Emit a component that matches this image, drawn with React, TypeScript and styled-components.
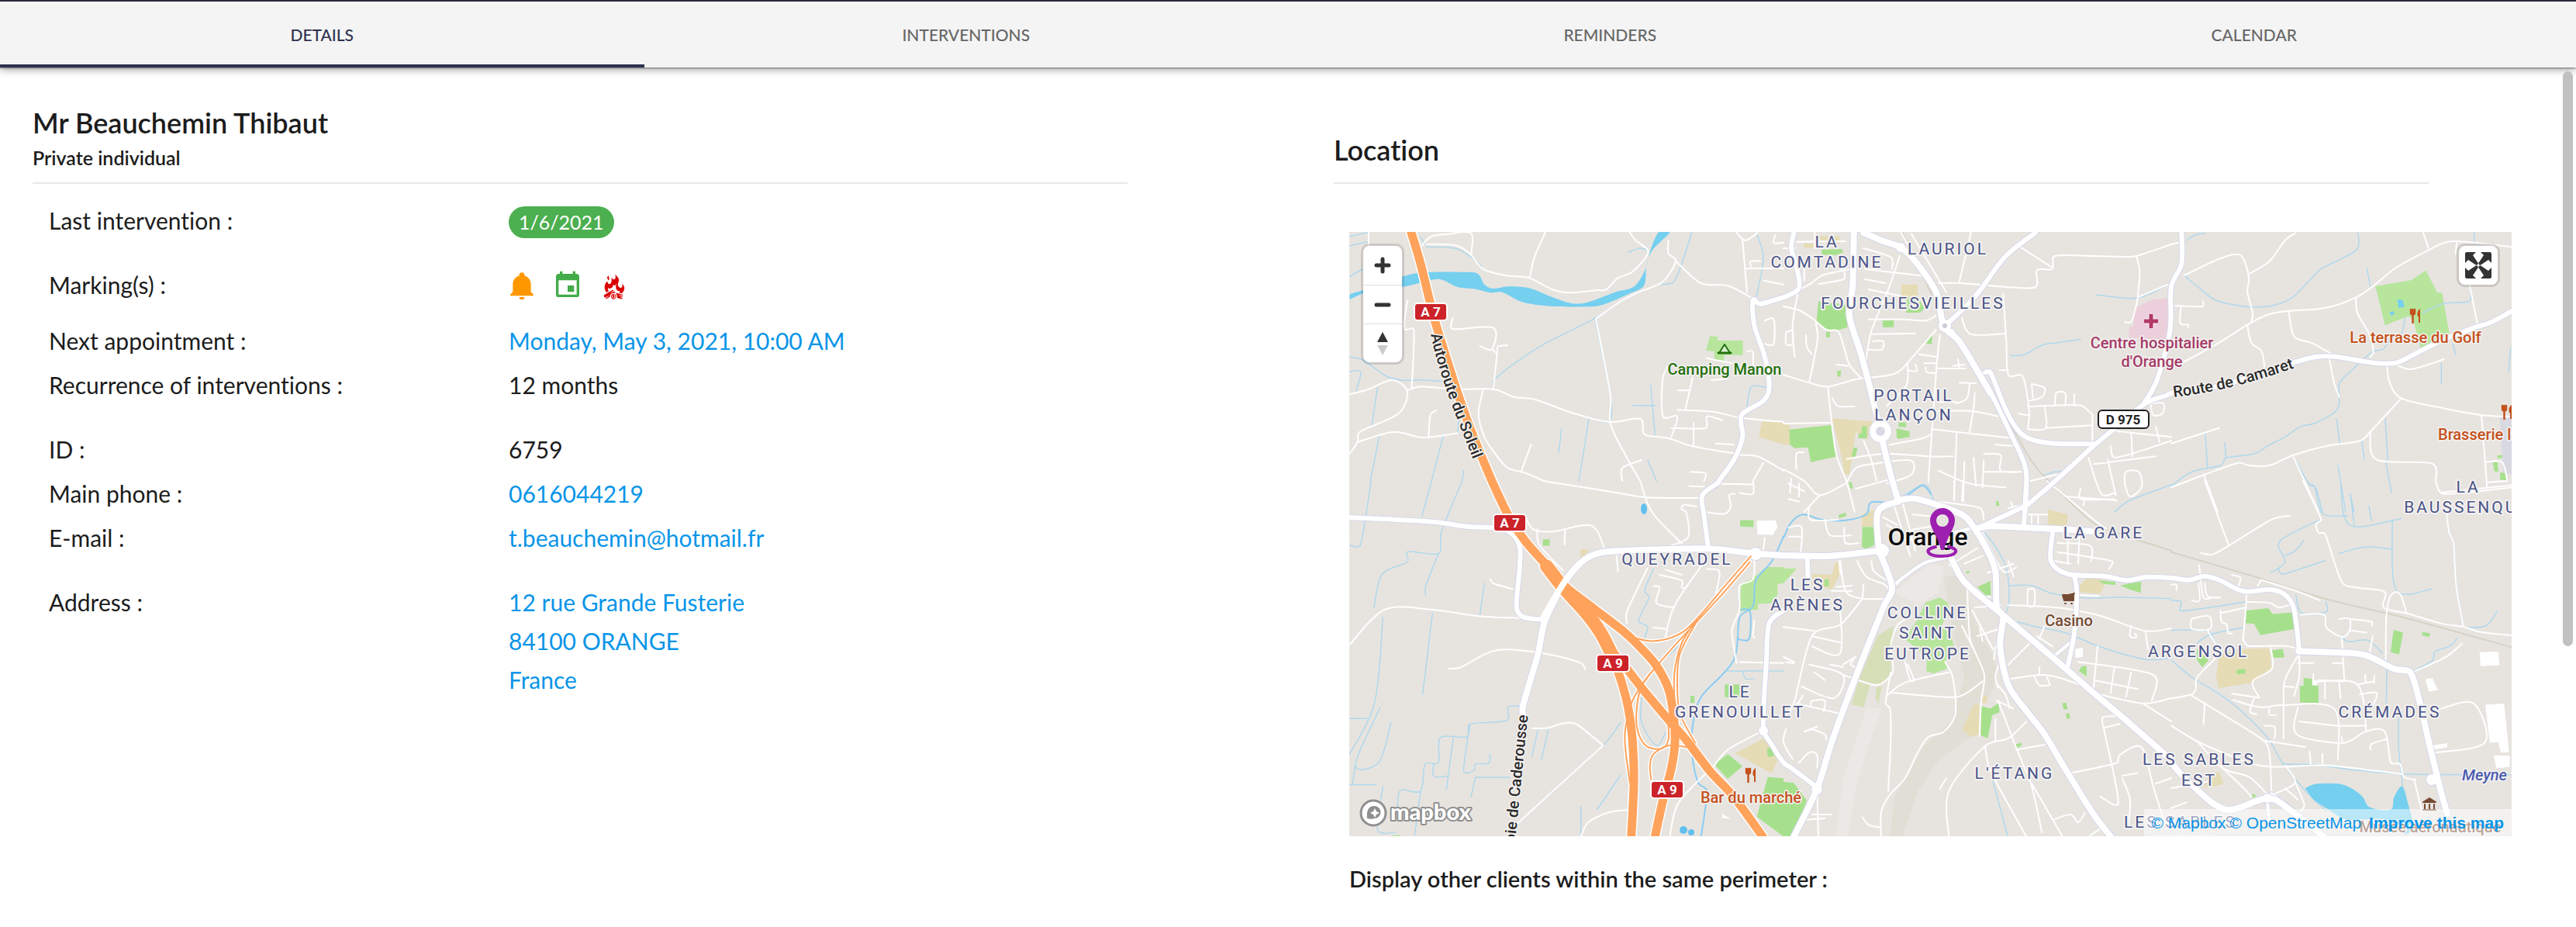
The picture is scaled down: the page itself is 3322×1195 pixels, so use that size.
import React, { useState } from "react";
import styled, { createGlobalStyle } from "styled-components";
import { GiCampfire } from "react-icons/gi";

const GlobalStyle = createGlobalStyle`
  * { box-sizing: border-box; }
  html, body { margin: 0; background: #fff; }
  body {
    font-family: Lato, "Noto Sans", sans-serif;
    font-variant-ligatures: none;
    color: #1c1c1c;
  }
`;

/* ---------- page chrome ---------- */

const Page = styled.div`
  position: relative;
  min-height: 100vh;
  overflow: hidden;
`;

const TabBar = styled.nav`
  position: relative;
  display: grid;
  grid-template-columns: repeat(4, 1fr);
  height: 87px;
  border-top: 2px solid #29263d;
  background: #f4f4f4;
  box-shadow: 0 1px 2px rgba(0, 0, 0, 0.4), 0 3px 10px rgba(0, 0, 0, 0.35);
`;

const Tab = styled.button<{ $active: boolean }>`
  border: 0;
  border-bottom: 4px solid ${(p) => (p.$active ? "#2e3150" : "transparent")};
  padding: 4px 0 0;
  background: none;
  font: 500 21px/28px Lato, sans-serif;
  color: ${(p) => (p.$active ? "#2e3150" : "#666")};
  text-transform: uppercase;
  cursor: pointer;
`;

const ScrollThumb = styled.div`
  position: absolute;
  top: 92px;
  right: 4px;
  width: 13px;
  height: 62vh;
  border-radius: 7px;
  background: #c1c1c1;
`;

const Columns = styled.main`
  display: grid;
  grid-template-columns: 1fr 1fr;
`;

const ClientColumn = styled.section`
  padding: 48px 207px 0 42px;
`;

const MapColumn = styled.section`
  padding: 48px 83px 0 59px;
`;

const Heading = styled.header<{ $inset?: number }>`
  display: flex;
  flex-direction: column;
  justify-content: flex-end;
  height: 102px;
  margin-right: ${(p) => p.$inset ?? 0}px;
  border-bottom: 2px solid #e8e8e8;
`;

const Title = styled.h1`
  margin: 0;
  font-size: 36px;
  line-height: 44px;
  font-weight: 600;
`;

const ClientKind = styled.p`
  margin: 0 0 9px;
  font-size: 25px;
  line-height: 46px;
  font-weight: 600;
`;

const LocationTitle = styled(Title).attrs({ as: "h2" })`
  margin-bottom: 20px;
`;

/* ---------- client details ---------- */

const Details = styled.dl`
  display: flex;
  flex-direction: column;
  gap: 26px;
  margin: 0;
  padding: 22px 0 0 21px;
`;

const Group = styled.div`
  display: flex;
  flex-direction: column;
`;

const Row = styled.div<{ $tall?: boolean }>`
  display: grid;
  grid-template-columns: minmax(0, 593px) minmax(0, 1fr);
  min-height: ${(p) => (p.$tall ? 72 : 57)}px;
  font-size: 30px;
  line-height: 50px;
`;

const Term = styled.dt`
  margin: 0;
`;

const Value = styled.dd`
  margin: 0;
`;

const Badge = styled.span`
  display: block;
  width: max-content;
  margin-top: 7px;
  padding: 0 13px;
  border-radius: 21px;
  background: #4caf50;
  color: #fff;
  font-size: 25px;
  line-height: 41px;
`;

const Markings = styled(Value)`
  display: flex;
  align-items: center;
  gap: 19px;
  height: 52px;
  margin-left: -3px;

  svg { width: 40px; height: 40px; }
`;

const Link = styled.a`
  color: #0a95e8;
  text-decoration: none;
`;

const Address = styled.address`
  display: flex;
  flex-direction: column;
  font-style: normal;
`;

/* ---------- map frame ---------- */

const MapFrame = styled.div`
  position: relative;
  margin: 62px 0 0 20px;
  overflow: hidden;

  > svg { display: block; width: 100%; height: auto; }
`;

const ControlGroup = styled.div<{ $side: "left" | "right" }>`
  position: absolute;
  top: 18px;
  ${(p) => p.$side}: 18px;
  width: 50px;
  border-radius: 8px;
  background: #fff;
  box-shadow: 0 0 0 3px rgba(0, 0, 0, 0.12);
`;

const ControlButton = styled.button`
  display: flex;
  align-items: center;
  justify-content: center;
  width: 50px;
  height: 50px;
  border: 0;
  padding: 0;
  background: none;
  cursor: pointer;

  & + & { border-top: 1px solid #ddd; }
`;

const Attribution = styled.div`
  position: absolute;
  right: 0;
  bottom: 0;
  display: flex;
  gap: 5px;
  padding: 0 10px;
  background: rgba(255, 255, 255, 0.5);
  font: 21px/35px "Liberation Sans", Arial, sans-serif;
`;

const StrongLink = styled(Link)`
  margin-left: 5px;
  font-weight: 700;
`;

const Perimeter = styled.h3`
  margin: 35px 0 0 20px;
  font-size: 29px;
  line-height: 40px;
  font-weight: 600;
`;

/* ---------- map geometry ---------- */

const SHEETS: Record<string, [number, number, number, number]> = {
  A: [1700, 140, 2.6133, 3],
  B: [2300, 240, 3, 3],
  C: [2800, 240, 3, 3],
  D: [1700, 620, 2.6133, 2.727],
  E: [2300, 620, 3, 3],
  F: [2800, 620, 3, 2.727],
};

type Point = [number, number];

function points(trace: string): Point[] {
  let sheet = SHEETS.A;
  const out: Point[] = [];
  trace.trim().split(/\s+/).forEach((token) => {
    if (SHEETS[token]) {
      sheet = SHEETS[token];
      return;
    }
    const [x, y] = token.split(",").map(Number);
    out.push([sheet[0] + x / sheet[2], sheet[1] + y / sheet[3]]);
  });
  return out;
}

const fmt = (p: Point) => `${p[0].toFixed(1)} ${p[1].toFixed(1)}`;

function straight(trace: string, close = false) {
  return "M" + points(trace).map(fmt).join("L") + (close ? "Z" : "");
}

function curve(trace: string, close = false) {
  const p = points(trace);
  let d = "M" + fmt(p[0]);
  for (let i = 0; i < p.length - 1; i++) {
    const a = p[Math.max(0, i - 1)];
    const b = p[i];
    const c = p[i + 1];
    const e = p[Math.min(p.length - 1, i + 2)];
    const len = Math.hypot(c[0] - b[0], c[1] - b[1]);
    const t1 = Math.min(0.16, (0.4 * len) / (Math.hypot(c[0] - a[0], c[1] - a[1]) || 1));
    const t2 = Math.min(0.16, (0.4 * len) / (Math.hypot(e[0] - b[0], e[1] - b[1]) || 1));
    d += `C${fmt([b[0] + (c[0] - a[0]) * t1, b[1] + (c[1] - a[1]) * t1])} ${fmt([
      c[0] - (e[0] - b[0]) * t2,
      c[1] - (e[1] - b[1]) * t2,
    ])} ${fmt(c)}`;
  }
  return d + (close ? "Z" : "");
}

const curves = (list: string[]) => list.map((t) => curve(t)).join("");
const areas = (list: string[]) => list.map((t) => straight(t, true)).join("");

const PARKS = areas([
  "A 1320,880 1348,883 1345,897 1431,897 1431,953 1368,953 1368,975 1335,973 1335,940 1307,935",
  "C 790,387 930,363 985,326 1030,412 1048,412 1077,575 1005,608 965,627 940,530 920,502 827,538",
  "D 1425,360 1465,342 1510,303 1568,303 1568,360 1548,362 1548,400 1530,430 1482,432 1482,452 1420,458",
  "E 0,338 52,338 0,395",
  "E 470,612 515,540 550,470 605,450 635,470 640,500 612,560 650,600 660,645 625,700 635,725 580,745 552,735 555,680",
]);

const PITCHES = areas([
  "B 135,445 240,458 248,545 210,557 168,556 128,520",
  "B 165,563 180,563 180,585 165,585",
  "B 208,714 223,712 220,737 208,735",
  "B 147,245 225,243 232,255 205,266 148,266",
  "B 383,520 427,518 427,545 385,546",
  "B 577,572 573,612 550,608",
  "B 475,430 520,432 545,470 530,488 475,490",
  "B 22,941 183,924 208,1045 105,1068 95,1010 43,1013 25,1000",
  "B 303,928 323,930 322,975 290,975 290,958 303,955",
  "B 272,1010 287,1012 278,1046 262,1046",
  "B 445,913 475,915 475,932 445,930",
  "B 437,937 488,948 488,970 445,977 437,970",
  "B 252,1143 263,1145 270,1170 257,1168",
  "B 822,1217 832,1217 835,1237 823,1237",
  "E 305,178 352,178 350,250 318,262 303,255",
  "E 212,132 240,122 244,134 216,144",
  "E 706,350 722,348 716,358 706,357",
  "E 750,410 800,388 803,440 782,443",
  "E 158,380 175,380 175,408 158,408",
  "E 765,870 800,880 832,860 836,895 808,905 790,995 763,985",
  "E 1078,860 1092,857 1100,880 1085,885",
  "E 1092,900 1105,898 1109,918 1096,921",
  "E 895,1020 918,1012 922,1022 900,1034",
  "E 1142,735 1155,716 1173,716 1173,756",
  "E 1215,385 1284,390 1284,403 1240,398",
  "E 1303,405 1340,395 1384,390 1382,433 1340,420",
  "E 0,1163 40,1168 90,1235 40,1376 0,1376",
  "D 1568,1045 1515,1040 1478,1180 1568,1250",
  "D 1380,960 1430,1003 1380,1047 1335,997",
  "D 1422,138 1467,138 1467,162 1422,160",
  "D 757,205 780,205 780,228 757,228",
  "D 1254,755 1268,755 1268,780 1254,780",
  "D 1370,715 1420,715 1420,760 1370,760",
  "D 1512,940 1530,935 1536,968 1515,970",
  "D 250,1246 278,1246 278,1250 250,1250",
  "F 290,455 375,447 392,468 470,462 480,520 345,542 320,502 288,500",
  "F 390,595 432,590 438,620 395,622",
  "F 252,664 286,660 288,676 254,680",
  "F 98,590 145,630 120,655 97,625",
  "F 498,720 512,720 512,692 545,696 545,718 570,720 570,783 498,778",
  "F 860,523 897,533 882,610 849,602",
  "F 972,530 1002,536 998,549 970,543",
  "F 312,1101 327,1103 325,1112 313,1111",
  "C 1244,1067 1262,1067 1266,1103 1250,1103",
  "C 1272,1108 1295,1108 1299,1137 1273,1136",
  "C 1262,1042 1284,1039 1284,1050 1262,1053",
]);

const SANDS = areas([
  "B 188,898 343,910 325,980 280,950 255,1115 235,1115 225,1050",
  "B 0,920 25,925 25,1000 0,1000",
  "B 140,193 218,193 215,225 140,212",
  "B 78,222 122,222 118,238 78,238",
  "B 455,380 520,380 520,430 455,425",
  "A 1495,1210 1568,1212 1568,1300 1485,1270",
  "D 885,240 908,240 908,282 882,282",
  "D 1405,957 1510,900 1555,965 1528,1028",
  "E 303,130 352,110 350,175 303,178",
  "E 200,315 222,315 218,360 187,420 107,400 112,360 187,362",
  "E 1025,110 1100,130 1095,178 1022,172",
  "E 1145,405 1175,375 1250,385 1225,437 1145,430",
  "E 745,410 805,385 803,395 760,412",
  "E 735,865 757,862 760,980 725,990 692,960",
  "E 775,830 792,830 785,860 765,858",
  "F 185,610 270,590 380,588 388,665 310,710 185,728 173,690",
  "F 140,1040 185,1022 203,1066 125,1080",
]);

const MEADOWS = areas([
  "E 365,598 425,560 415,740 380,790 290,770",
  "E 290,778 335,790 310,875 262,865",
  "E 360,795 380,795 368,862 355,840",
]);

const RIDGES = areas([
  "E 620,370 700,365 730,520 800,650 830,740 800,830 740,870 735,980 600,1080 520,1200 460,1376 410,1376 430,1220 540,1030 650,930 700,760 650,560",
]);

const PALE_RIDGES = areas([
  "E 430,430 560,320 620,330 600,430 520,480",
  "E 320,880 380,880 330,1020 280,1180 250,1376 205,1376 230,1150",
]);

const WATER = [
  curve("A 106,738 150,715 200,692 282,690 350,672 410,660 470,690 530,698 580,712 620,710 680,745 730,758 800,765 900,766 960,758 1050,715 1098,684 1106,610 1125,550 1185,478 1148,478 1120,545 1103,620 1065,688 1000,710 905,750 850,752 780,725 710,694 640,688 590,696 560,680 535,637 470,632 400,632 340,635 282,650 200,685 106,718", true),
  curve("F 518,1080 560,1065 650,1065 700,1082 740,1110 765,1145 825,1158 855,1150 862,1112 893,1073 915,1130 935,1215 900,1240 830,1190 680,1190 600,1150 550,1120", true),
  straight("C 875,438 895,440 903,465 880,472", true),
  straight("C 845,488 860,484 863,496 848,500", true),
];

const STREAMS = curves([
  "A 106,650 150,620 200,600",
  "A 106,495 170,478", "A 106,530 165,515",
  "A 106,960 150,972 230,1035 280,1050 345,1050 420,1055 480,1060",
  "A 106,1017 143,1018 128,1090",
  "A 200,1080 180,1225", "A 205,1270 176,1440",
  "A 422,1262 382,1440", "A 490,1400 485,1440", "A 475,1180 470,1255",
  "A 365,535 460,540 515,575 550,610", "A 345,495 360,525",
  "A 932,812 985,1110 982,1210 930,1198", "A 912,1200 878,1440", "A 820,1240 810,1330",
  "A 592,1080 592,1050 680,970 770,905 930,812 1040,730",
  "A 1120,1070 1135,1260", "A 1060,1148 1138,1148", "A 1110,1360 1140,1440",
  "A 1258,480 1225,600 1198,670 1160,680", "A 1045,555 1085,540 1110,548",
  "A 1480,490 1500,580 1475,735", "A 1508,1078 1460,1075 1445,1150",
  "D 178,0 142,226 106,226", "D 382,0 350,122", "D 485,0 415,180 405,255 303,248 300,285 215,328 188,445",
  "D 405,255 362,370 362,402", "D 560,360 545,470", "D 385,465 352,750", "D 218,480 190,780 106,960",
  "D 106,835 165,835", "D 208,797 125,998 205,988 245,848", "D 680,792 640,795 635,842 512,855 500,900 412,902 405,990 360,996 345,1090 275,1090 268,1180",
  "D 115,1068 125,998", "D 106,1068 195,1068", "D 388,996 390,1038 435,1038", "D 455,905 432,1085", "D 512,855 490,1020 525,1018 530,995 575,992 578,960",
  "D 530,1042 645,1042", "D 530,1042 515,1110", "D 218,1075 200,1225 260,1235", "D 345,1090 325,1245", "D 740,875 720,970", "D 775,875 752,980",
  "D 1018,850 960,930 670,1205", "D 1018,1035 940,1155", "D 885,1145 885,1250",
  "D 1130,310 1100,385 1115,410 1080,490 1110,512 1100,550", "D 1225,570 1150,640", "D 1090,760 1090,850 1140,930 1170,885",
  "D 1378,668 1568,668", "D 1430,668 1440,695 1470,695",
  "B 1210,420 1350,434 1430,410 1500,370", "B 877,655 930,652 1000,615 1060,605 1150,592",
  "B 1010,1117 1050,1105 1100,1103", "B 1280,1260 1340,1215 1500,1155",
  "B 460,1200 535,1155 560,1165 580,1210",
  "C 60,210 90,190 130,182", "C 50,345 110,395 170,440 250,460 320,468 400,460 470,430 530,370 580,320 660,280 722,240 722,180",
  "C 757,318 770,385", "C 905,510 890,570 850,590 820,630 780,640 700,710 650,765 645,860 560,915 500,930 440,970 380,1000 320,1035 215,1050 190,1080 80,1105 0,1160",
  "C 975,490 1050,455 1150,447 1160,425 1155,385", "C 1045,685 1045,765", "C 1313,625 1305,718",
  "C 132,960 140,1090", "C 207,990 212,1050", "C 640,900 652,995", "C 737,985 747,1055", "C 828,900 838,1060", "C 830,1065 852,1185",
  "C 472,1045 535,1155 558,1165 585,1260", "C 645,1080 675,1260", "C 693,1190 707,1260", "C 1090,610 1100,650", "C 1172,180 1172,215",
  "F 530,10 555,20 585,115 685,122", "F 655,0 690,155 890,132", "F 693,45 708,155", "F 765,88 775,140", "F 855,135 870,382 1008,380", "F 650,255 750,232 860,240",
  "F 580,135 420,212 440,285 385,323", "F 440,262 480,245 512,210", "F 415,310 430,328 595,280",
  "F 1060,70 1075,180 1092,210 1103,360 1130,510", "F 1130,515 1215,510 1260,460", "F 1105,553 1080,580 1020,600 1012,630 935,670",
  "F 835,630 832,780", "F 880,830 880,940 895,1070", "F 482,400 505,465 600,460 598,425",
  "F 0,525 140,528 170,570", "F 0,420 38,425 38,457 290,425", "F 100,570 150,540 280,515",
  "F 0,630 80,690 170,740 260,800 370,900 430,990 520,1090 600,1160",
  "F 430,995 560,998 700,1015 900,1030 1318,1033", "F 650,545 690,565 760,560 815,605",
  "E 870,405 960,405 1040,435 1160,452 1320,450 1500,455", "E 905,545 980,565 1100,590 1220,640 1400,690 1500,685",
  "E 780,200 830,270 865,350 872,470 850,530", "E 810,1160 868,1376",
]);

const RIVERS = curves([
  "D 1568,195 1530,280 1475,350 1465,440 1420,480 1400,630 1290,760 1262,860 1260,960 1280,1060 1310,1090 1290,1250",
  "E 0,220 30,160 75,130 150,150 240,152 320,130 340,82 440,80 535,18 570,50",
  "D 1425,452 1455,458 1452,555 1412,555",
]);

const LANES = curves([
  "A 170,478 170,530", "A 350,530 380,495 440,485 515,482 515,565", "A 365,525 460,528 510,560 555,620 630,645 710,655 790,700 850,712 940,702 970,700 1010,655 1060,630 1112,555 1070,510 1050,478",
  "A 765,480 730,570 712,655", "A 300,742 290,850 322,855 315,1080",
  "A 453,812 453,852 590,848 585,930 545,918", "A 585,930 603,945 605,920 638,915", "A 603,945 590,1085",
  "A 106,1105 170,1085 250,1050 300,1095 270,1180 140,1250 132,1290 106,1335", "A 132,1290 255,1250 350,1272 470,1255",
  "A 300,1090 345,1075 470,1085 590,1085 660,1115 730,1125 860,1178 980,1212 1085,1200 1100,1260 1180,1275 1260,1305 1410,1335",
  "A 397,1167 378,1185 372,1270", "A 555,1090 540,1180 560,1270 600,1340 640,1390 700,1410 760,1440", "A 718,1298 685,1400",
  "A 935,812 1020,745 1080,710 1160,670 1205,590 1180,560 1180,510", "A 1205,590 1290,675 1380,685 1465,735",
  "A 935,812 985,1110 985,1220 1040,1350 1085,1440", "A 1430,510 1445,710", "A 1410,480 1440,510 1480,480", "A 1440,618 1568,618",
  "A 1175,1000 1160,1050 1162,1190 1210,1190 1190,1270", "A 1262,1040 1238,1160", "A 1212,1090 1255,1090", "A 1210,1165 1330,1172 1420,1195 1568,1212",
  "A 1190,1235 1305,1235 1310,1190 1362,1205", "A 1265,1215 1265,1305", "A 1025,1440 1025,1390 1090,1360", "A 1340,1295 1400,1300", "A 1410,1340 1480,1345 1568,1400",
  "A 1500,1370 1465,1440", "A 1255,1405 1305,1410 1300,1440", "A 1505,910 1535,910 1535,815 1505,820", "A 1308,965 1395,985", "A 1325,1050 1380,1045", "A 1445,940 1465,940 1465,1000",
  "A 1458,610 1458,590 1490,590", "A 1500,665 1568,680", "A 1540,490 1535,520 1568,518",
  "D 760,0 1000,40 1110,58 1290,60", "D 1085,0 1125,110 1225,220", "D 1160,235 1245,200 1240,110 1225,100 1230,85 1275,90", "D 1310,110 1370,115 1390,90 1385,50 1405,45",
  "D 1465,12 1360,10", "D 1250,18 1300,20", "D 1420,42 1465,45 1465,0", "D 700,130 725,170 790,178 920,157 965,240", "D 832,170 830,225", "D 738,170 745,225 825,315",
  "D 580,345 590,360 655,380", "D 106,575 225,452 380,452 540,475 680,482", "D 440,660 480,655 600,595 755,605 885,640 900,662",
  "D 720,870 775,868 825,852 870,855 960,930", "D 670,1205 960,930", "D 885,1250 910,1200 980,1165 1042,1157",
  "D 1335,1000 1215,1130 1185,1250", "D 1485,885 1380,945 1335,1000", "D 1005,260 1010,318",
  "D 1110,305 1040,460 1040,500", "D 1150,330 1225,350 1225,375 1240,375", "D 1130,370 1150,375 1140,430 1200,445", "D 1130,515 1170,520", "D 1290,300 1200,440 1170,550", "D 1310,310 1352,318 1340,395", "D 1170,312 1225,330",
  "D 1470,270 1465,345 1420,370 1420,450 1395,520 1400,580 1410,640", "D 1470,490 1465,540 1470,552", "D 1420,637 1568,640", "D 1500,240 1505,200",
  "B 0,465 60,480 110,510 165,555 210,560 230,610 255,690 300,742", "B 0,730 100,760 172,775 290,745 430,725 500,660 590,555",
  "B 172,775 185,900 205,1040 245,1145 275,1260", "B 125,530 132,590 110,710 100,755", "B 55,415 35,540 43,660", "B 10,565 10,610 35,610 35,560 10,565", "B 87,575 90,620 110,650",
  "B 0,430 100,380 150,345 260,320", "B 80,320 80,365", "B 135,378 232,360 235,330", "B 0,240 45,240", "B 50,215 240,213", "B 120,180 120,240",
  "B 310,240 415,275 420,320", "B 450,270 405,400 340,560 320,670", "B 315,320 480,340 550,348", "B 315,360 395,375", "B 330,400 460,425", "B 330,515 460,515 550,520 590,500", "B 335,572 510,570", "B 345,600 385,600 380,632 330,632",
  "B 455,180 480,225", "B 495,185 630,410", "B 600,375 690,375 860,390 975,390 980,325 1040,320 1050,270 1200,270 1300,272 1365,270 1500,225", "B 725,180 680,370", "B 915,235 1040,315",
  "B 1365,270 1378,330 1370,430 1360,480 1345,525 1320,525", "B 1370,430 1500,375", "B 850,415 862,600 870,730 925,735 950,870 945,940", "B 690,510 725,572 858,570", "B 835,712 870,712",
  "B 605,575 592,700 575,940 560,1145", "B 480,690 475,770 400,850", "B 545,685 590,685", "B 525,650 590,660", "B 590,705 705,705", "B 550,700 555,720 590,722", "B 655,695 700,690", "B 675,670 680,705", "B 510,690 515,715 480,712",
  "B 205,690 250,695", "B 190,820 210,850 275,852", "B 0,918 180,915", "B 720,765 710,820 670,840", "B 740,800 735,860 720,950", "B 600,870 730,870 830,890", "B 680,760 745,762", "B 600,835 670,835", "B 575,940 890,975",
  "B 245,1055 390,1035 570,1045 655,1045", "B 410,1000 540,975 570,960", "B 670,955 660,1210", "B 700,1065 695,1220", "B 735,1050 745,1160", "B 775,1060 770,1165", "B 600,1100 720,1150 860,1165", "B 775,1035 840,1040 840,1100 920,1105", "B 780,1105 920,1105", "B 820,1000 900,1005",
  "B 245,1145 280,1090 340,1075 490,1060 495,1115 400,1150", "B 310,985 340,1060 360,1140", "B 280,1170 410,1135", "B 0,1095 80,1140 140,1195 240,1150", "B 140,1195 80,1260", "B 20,1210 60,1220", "B 30,1130 25,1185", "B 60,1150 60,1200", "B 20,1150 80,1180", "B 50,1095 50,1035 78,1030",
  "B 945,852 1050,848 1150,848 1190,880", "B 1050,850 1055,800 1090,800 1090,850", "B 1010,850 1015,935 950,940", "B 1015,935 1195,925", "B 1125,805 1125,850", "B 960,765 1010,780 1000,815 950,830", "B 960,765 965,820", "B 1195,880 1195,985", "B 910,880 945,885",
  "B 1270,945 1500,970", "B 1345,955 1350,1045", "B 1440,930 1455,990", "B 1265,1005 1285,1050 1500,985", "B 1180,1050 1230,1190 1285,1185", "B 1255,1060 1285,1195", "B 1200,1075 1440,1045", "B 1420,840 1470,840 1465,880 1430,885 1420,840", "B 1320,1150 1325,1105 1375,1105 1385,1165 1340,1200 1320,1150",
  "B 955,1140 1080,1110", "B 1090,1200 1290,1215", "B 1160,1235 1165,1205",
  "C 0,225 30,218", "C 50,345 190,280 268,267 300,350 295,410 315,490 310,525", "C 300,340 380,290 440,210 480,182",
  "C 0,705 160,620 305,530 380,495 450,483 600,470 715,430 790,380 870,315 990,250 1070,215 1170,218 1318,235", "C 975,180 995,240", "C 1105,212 1100,262",
  "C 715,430 720,490 765,570 782,640 770,660", "C 455,485 475,580 540,605 615,645", "C 295,540 310,605 350,640 362,710", "C 1155,385 1185,535",
  "C 612,670 630,760 650,815", "C 835,695 845,760 890,820 1060,860 1200,885 1318,892", "C 890,820 770,950 730,985 600,1005 472,1040 380,1080 300,1080 260,1070 130,1115 0,1165", "C 472,1045 570,1260",
  "C 770,950 795,1058 1010,1073 1025,1150 1055,1190 1318,1165", "C 1200,885 1222,1165", "C 125,1115 180,1260", "C 0,995 185,935", "C 880,695 930,708 1055,670", "C 15,462 122,465 122,445", "C 38,465 35,530 65,535 65,545", "C 1215,1067 1280,1067 1299,1135", "C 1225,1145 1300,1140",
  "F 130,0 222,225", "F 115,253 160,258 222,228 280,195 390,135 460,122", "F 510,0 580,135 560,150 570,182 595,185 660,355 720,375 825,390 822,445 910,465 1040,500 1130,513 1200,532 1318,543", "F 1050,40 1318,15", "F 1060,70 1075,180 1092,215 1103,370 1130,510",
  "F 830,630 832,480 845,410 870,390 890,405 910,465", "F 108,295 125,410 160,410", "F 235,330 268,340 260,370", "F 348,348 480,385 575,420", "F 348,348 335,368",
  "F 290,395 290,425 278,560", "F 290,425 380,428 415,445 460,435", "F 190,455 195,495 215,505 220,535 235,535", "F 190,465 290,445", "F 278,560 300,580 440,580 490,590", "F 500,470 590,470 600,515 660,548 690,525 690,485 650,485", "F 690,485 775,495 775,510", "F 690,525 755,533", "F 660,548 670,705", "F 780,545 768,600",
  "F 105,360 110,420 80,420", "F 130,360 140,405 190,410", "F 0,365 20,365 20,385", "F 78,485 145,475 150,520 80,520 78,485", "F 140,525 170,570",
  "F 490,615 440,700 435,785 435,905", "F 495,615 495,690 475,755", "F 440,722 475,725", "F 550,680 555,705 720,715 755,880", "F 570,700 670,705", "F 490,640 550,640", "F 625,640 665,640", "F 595,710 595,765", "F 650,710 655,765",
  "F 240,770 340,795 435,788 630,800 645,980", "F 235,748 340,762", "F 320,765 305,810 330,820", "F 380,795 380,822 405,822", "F 490,795 485,890 650,922 700,910 750,882 825,880 850,990 885,995 900,1040 945,1050", "F 495,845 640,860 755,860", "F 720,715 785,705", "F 750,680 752,710", "F 785,685 785,710", "F 730,750 795,745 780,790", "F 770,945 775,925 830,908", "F 660,900 662,920",
  "F 385,588 390,660 315,705 340,760", "F 170,625 100,690 95,730 80,750 0,765", "F 80,755 355,910 380,960 388,1090", "F 130,780 125,855", "F 0,860 100,915 240,970 340,1000 430,1005 600,1000 800,1020 890,1030", "F 355,912 520,935", "F 360,860 400,865 400,905", "F 535,950 540,1000", "F 585,960 585,1000",
  "F 100,915 200,1010 300,1040 370,1100", "F 200,1010 280,1080 310,1110", "F 0,1080 150,1055", "F 440,1000 480,1060 400,1100", "F 480,1060 515,1140 490,1165", "F 440,1080 490,1120", "F 940,1050 970,1160", "F 0,1150 60,1130", "F 1045,800 1170,782 1213,920 1018,955", "F 935,672 1060,620 1125,572",
  "E 100,100 105,150 210,150", "E 160,150 180,210 260,210", "E 235,180 240,240 290,240", "E 20,180 70,180 65,290", "E 20,215 70,215", "E 460,80 510,270", "E 385,140 440,170", "E 400,170 510,240", "E 430,100 490,290", "E 500,130 600,140", "E 490,190 600,170",
  "E 285,310 320,370 390,400 410,420", "E 340,310 350,350 400,385", "E 305,455 310,400", "E 215,310 220,360", "E 185,425 265,425", "E 205,410 265,405", "E 220,310 240,425 305,455 390,455", "E 305,455 220,555 110,600 40,860 0,920", "E 215,450 220,665 110,640", "E 110,600 220,625", "E 0,565 120,580", "E 0,680 40,700 40,705 10,700",
  "E 100,710 230,750 195,840 70,795", "E 180,710 230,720", "E 230,710 280,680", "E 160,770 120,740", "E 230,750 290,770", "E 290,770 360,790 410,760 425,730 415,640 440,560 480,530", "E 270,690 260,710 290,725",
  "E 415,740 395,860 412,880 415,1000 405,1200", "E 415,818 550,830 680,833 770,775", "E 400,830 470,780 640,740", "E 470,700 490,770 505,770 480,710", "E 625,700 655,760 665,900 620,970 560,990 520,1050 470,1150 410,1215 378,1280 378,1376",
  "E 690,560 740,660 775,740 775,790 765,850 758,985", "E 710,400 720,600 740,660", "E 730,500 810,650", "E 750,600 840,570", "E 760,570 770,620", "E 740,490 840,480", "E 720,430 800,450", "E 820,640 815,690", "E 670,310 750,260", "E 700,320 770,290", "E 790,355 890,320", "E 640,320 720,420",
  "E 830,715 820,760 830,800", "E 830,790 860,830 875,880", "E 825,850 890,880", "E 820,920 820,1005", "E 640,1376 640,1200 780,1025 870,995 940,930", "E 780,1025 800,1120 940,1376", "E 830,850 880,980 920,1080 960,1180 1000,1360", "E 900,1040 1010,1020", "E 960,1170 1080,1376", "E 870,710 950,630", "E 880,765 1000,750 1080,765 1150,790", "E 970,755 990,790 1030,790", "E 1020,760 1030,785", "E 990,720 990,750",
  "E 870,480 1060,490 1220,520 1400,580 1500,570", "E 945,420 970,420 970,480 945,480 945,420", "E 1130,440 1220,445", "E 990,610 1010,560", "E 980,600 1040,640", "E 1400,580 1410,650", "E 1345,560 1340,600 1365,605 1360,590",
  "E 1215,640 1200,800", "E 1140,700 1430,750 1425,850", "E 1280,720 1265,820", "E 1345,740 1325,835", "E 1200,770 1370,805", "E 1200,820 1390,860 1500,840", "E 1390,860 1500,930",
  "E 1290,910 1235,915 1240,960 1295,1245 1225,1220", "E 1240,955 1300,940", "E 1110,1130 1290,1090 1300,1060 1385,1030 1430,1180 1470,1310", "E 1310,1140 1370,1130", "E 1310,1150 1340,1230 1335,1330", "E 1045,1310 1110,1290 1140,1320 1165,1285", "E 1180,1376 1240,1335", "E 1440,1170 1500,1150",
  "E 305,1300 330,1330 375,1340", "E 605,1190 630,1150", "E 130,1200 135,1376", "E 110,1290 185,1290", "E 90,1310 160,1305", "E 10,960 0,1010 35,1075", "E 60,1090 100,1050 130,1060 130,1110", "E 110,960 160,980 165,1000", "E 105,870 110,850 160,850 155,890", "E 50,860 220,900", "E 80,970 130,950", "E 75,830 50,870",
  "E 870,105 940,90", "E 940,130 1020,130", "E 960,130 960,175", "E 985,130 985,175", "E 880,80 890,120", "E 1150,30 1150,70 1280,70", "E 1060,240 1185,250 1190,310", "E 1060,275 1270,310 1260,340", "E 1100,200 1100,320", "E 1145,200 1140,320", "E 1050,310 1110,320", "E 770,200 800,260 850,350 900,335", "E 870,310 890,370",
  "E 600,80 640,85 760,105 775,150", "E 660,0 660,75", "E 695,0 690,75", "E 1020,0 1200,150 1250,185",
]);

const MINOR = curves([
  "E 440,395 430,400 540,320 640,295", "E 1050,675 1115,620", "E 640,205 740,180",
  "F 388,1100 520,1190 590,1250", "F 370,1110 380,1200",
]);

const PRIMARY = curves([
  "B 40,180 30,240 50,310 60,395 0,430",
  "A 1568,730 1490,755 1465,745 1470,840 1505,960 1520,1080 1500,1130 1430,1180 1425,1220 1430,1270 1400,1360 1350,1440 D 1350,5 1295,50 1300,120 1315,240",
  "E 92,300 95,375",
  "D 1568,455 1520,500 1510,640 1500,870 1530,930 1568,990 E 30,1110 130,1185",
  "D 106,128 380,143 500,160 630,172 680,240 668,440 690,478 755,487",
  "B 975,180 860,270 770,390 720,450 625,540",
  "B 780,720 800,720 930,965 1205,998",
  "E 1042,195 1035,310 1100,360 1240,368 1330,385 1400,372 1500,375 F 70,348 130,335 190,350 280,388 380,382 440,400 475,450 495,595",
  "E 1125,365 1135,430 1125,590 1100,715",
  "E 940,0 930,170",
  "B 935,1260 938,1100 890,980 780,760 650,560",
  "C 40,180 40,300 0,390 B 1495,560 1445,750 1395,840",
  "C 365,715 480,680 560,660 640,660 780,683 870,683 950,645 1060,590 1180,545 1240,525 1318,483",
  "C 365,715 200,770 0,800 B 1480,810 1400,840 1290,930 1205,1000 1040,1150 935,1240 E 930,100 745,185",
]);

const TRUNK = curves([
  "B 272,180 268,380 255,500 300,650 340,800 375,950 410,1100 445,1220",
  "B 310,180 380,210 455,238 510,290 590,410 620,540 680,600 800,800",
  "D 690,830 690,790 740,610 765,490 840,340 900,275 960,250 1080,243 1310,238 1470,255 1568,262 E 0,288 180,290 370,270",
  "E 440,75 520,70 690,130 740,185 790,270 820,350 825,490 850,525 838,640 870,790 940,890 1010,980 1100,1130 1200,1290 1270,1380",
  "E 370,270 365,120 440,80",
  "E 370,270 420,410 390,480 290,730 190,1000 130,1190 40,1376",
  "E 650,300 700,390 850,520 1050,690 1200,820 1330,930 1500,1080 F 0,990 70,1060 210,1155 370,1115 450,1150 590,1250",
  "E 745,185 800,175 930,180 1100,188 1190,195",
  "F 495,598 640,603 750,612 860,660 930,680 1000,930 1040,1080 1068,1170",
  "D 690,830 680,900",
]);

const MOTORWAY = [
  curve("A 313,478 345,600 388,800 420,920 470,1100 520,1260 585,1440 D 585,0 645,130 700,215 790,320 860,410 930,500 985,590 1040,660 1100,740 1185,845 1240,910 1320,1020 1400,1110 1498,1250"),
  curve("D 780,320 830,370 930,450 1030,530 1090,590 1140,650 1180,730 1197,820 1202,920 1190,1010 1160,1130 1135,1250"),
  curve("D 985,600 1020,700 1045,800 1058,900 1064,1050 1055,1250"),
];
const MOTORWAY_MERGE = curve("D 770,300 830,380 900,460 950,530 985,600");

const RAMPS = curves([
  "D 1458,265 1370,370 1285,475 1230,530 1170,557 1110,562 1050,545",
  "D 1455,285 1360,400 1280,490 1200,580 1110,690 1060,770 1035,870 1035,940 1050,1060",
  "D 1280,480 1225,570 1200,680 1202,800",
  "D 1272,500 1218,610 1210,720 1220,820 1270,920",
  "D 1150,640 1090,720 1072,820 1080,890 1110,935 1160,940 1180,910 1180,860",
  "D 1240,935 1180,930 1130,960 1118,1000 1122,1050",
  "D 1150,1110 1148,1180",
]);

const BUILDINGS = areas([
  "F 1193,602 1265,600 1270,648 1197,651", "F 983,697 1010,693 1032,735 997,740",
  "F 1215,787 1288,783 1307,953 1275,955 1265,918 1232,920", "F 1248,965 1310,965 1310,1005 1258,1010",
  "F 1010,930 1068,922 1068,937 1010,945", "D 1478,140 1540,138 1548,160 1532,190 1480,188",
  "D 1360,1170 1390,1188 1362,1185", "E 1128,650 1158,645 1158,680 1130,685", "F 545,700 565,700 565,718 547,718",
]);

const ROUNDABOUTS: [number, number, number][] = [
  [2425, 556, 14], [2508, 420, 8], [2451, 319, 6], [2264, 714, 8], [2274, 942, 6], [2343, 1017, 7],
  [2427, 710, 9], [2262, 388, 5], [2924, 1029, 6], [2965, 839, 5], [3136, 1005, 7],
];

/* ---------- map labels ---------- */

const MapSvg = styled.svg`
  font-family: Roboto, "Liberation Sans", sans-serif;
  fill: none;
  stroke-linejoin: round;
  stroke-linecap: round;
`;

const District = styled.text`
  font-size: 21px;
  letter-spacing: 3px;
  text-anchor: middle;
  fill: #4a5489;
  stroke: #f4f2f0;
  stroke-width: 4px;
  paint-order: stroke;
`;

const Place = styled.text<{ $color: string }>`
  font-size: 20px;
  font-weight: 500;
  fill: ${(p) => p.$color};
  stroke: #f4f2f0;
  stroke-width: 3px;
  paint-order: stroke;
`;

const City = styled(Place)`
  font-size: 32px;
`;

const Wordmark = styled.text`
  font: 900 29px Lato, sans-serif;
  fill: #fff;
  stroke: #8f8f8f;
  stroke-width: 4px;
  paint-order: stroke;
`;

const ShieldText = styled.text`
  font-size: 17px;
  font-weight: 700;
  text-anchor: middle;
`;

const DISTRICTS: [string, number, number][] = [
  ["LA", 2356, 319], ["COMTADINE", 2356, 345], ["LAURIOL", 2512, 328], ["FOURCHESVIEILLES", 2467, 398],
  ["PORTAIL", 2468, 517], ["LANÇON", 2468, 542], ["QUEYRADEL", 2163, 728], ["LES", 2331, 761],
  ["ARÈNES", 2331, 787], ["COLLINE", 2486, 797], ["SAINT", 2486, 823], ["EUTROPE", 2486, 850],
  ["LE", 2244, 899], ["GRENOUILLET", 2244, 925], ["LA GARE", 2713, 694], ["ARGENSOL", 2835, 847],
  ["CRÉMADES", 3082, 925], ["LES SABLES", 2836, 986], ["EST", 2836, 1013], ["L'ÉTANG", 2598, 1004],
  ["LES SABLES", 2812, 1067], ["OUEST", 2812, 1094], ["LA", 3183, 635], ["BAUSSENQUES", 3189, 661],
];

const Fork = ({ x, y }: { x: number; y: number }) => (
  <g transform={`translate(${x} ${y})`}>
    <path d="M-6 -8v4a2.500 2.500 0 0 0 5 0v-4M-3.500 -8v17" stroke="#c4511c" strokeWidth="2.500" />
    <path d="M6 -9c-4 2-4 8-3 10h1v8h2z" fill="#c4511c" />
  </g>
);

const Shield = ({ x, y, label }: { x: number; y: number; label: string }) => (
  <g>
    <rect x={x - 21} y={y - 11} width="42" height="22" rx="4" fill="#cc2229" stroke="#fff" strokeWidth="2" />
    <ShieldText x={x} y={y + 6} fill="#fff">{label}</ShieldText>
  </g>
);

function MapDrawing() {
  return (
    <MapSvg viewBox="1740 299 1499 779" role="img" aria-label="Map of Orange">
      <rect x="1740" y="299" width="1499" height="779" fill="#e7e4e0" />
      <path d={RIDGES} fill="#dedbd1" opacity="0.7" />
      <path d={PALE_RIDGES} fill="#ebe8e6" />
      <path d={MEADOWS} fill="#d7dfb8" />
      <path d={SANDS} fill="#e5dcb6" />
      <path d={PARKS} fill="#b7e59c" />
      <path d={PITCHES} fill="#a7e08d" />
      <path d={straight("B 1370,465 1430,437 1500,432 1500,560 1480,595 1335,585 1338,545 1355,540 1352,490", true)} fill="#ebd0dc" />
      <path d={straight("C 1270,890 1318,890 1318,1115 1285,1110", true)} fill="#d9d9e2" />
      <path d={STREAMS} stroke="#b0d8ec" strokeWidth="1.500" />
      <path d={RIVERS} stroke="#8accf2" strokeWidth="2" />
      {WATER.map((d, i) => <path key={i} d={d} fill="#75cfef" />)}
      <ellipse cx="2120" cy="656" rx="4" ry="7" fill="#62c0ee" />
      <circle cx="2171" cy="1070" r="5" fill="#62c0ee" />
      <circle cx="2181" cy="1073" r="4" fill="#62c0ee" />
      <path d={curve("B 460,180 630,530 780,760 900,960 980,1090 1150,1260 E 1230,180 1500,270 F 0,250 300,330 600,415 900,480 1318,585")} stroke="#d6d2c6" strokeWidth="2" />
      <path d={LANES} stroke="#fff" strokeWidth="2" />
      <path d={BUILDINGS} fill="#fff" />
      <path d={MINOR} stroke="#d9daea" strokeWidth="6" />
      <path d={MINOR} stroke="#fff" strokeWidth="4" />
      <path d={PRIMARY} stroke="#d5d7ea" strokeWidth="8" />
      <path d={TRUNK} stroke="#d5d7ea" strokeWidth="10" />
      {ROUNDABOUTS.map(([x, y, r]) => <circle key={`${x}-${y}`} cx={x} cy={y} r={r + 1} fill="#d5d7ea" />)}
      <path d={PRIMARY} stroke="#fff" strokeWidth="6" />
      <path d={TRUNK} stroke="#fff" strokeWidth="8" />
      {ROUNDABOUTS.map(([x, y, r]) => <circle key={`${x}-${y}`} cx={x} cy={y} r={r} fill="#fff" />)}
      <circle cx="2425" cy="556" r="6" fill="#d9dae4" />
      <circle cx="2508" cy="420" r="3" fill="#c9cbd8" />
      <path d={RAMPS} stroke="#fff" strokeWidth="5" />
      <path d={MOTORWAY.join("")} stroke="#fff" strokeWidth="14" />
      <path d={RAMPS} stroke="#ffa35c" strokeWidth="2" />
      <path d={MOTORWAY_MERGE} stroke="#fff" strokeWidth="20" />
      <path d={MOTORWAY.join("")} stroke="#ffa35c" strokeWidth="11" />
      <path d={MOTORWAY_MERGE} stroke="#ffa35c" strokeWidth="17" />
      <path d={curve("D 755,487 800,405 840,340 880,292")} stroke="#fff" strokeWidth="8" />

      {DISTRICTS.map(([t, x, y]) => <District key={`${t}-${y}`} x={x} y={y}>{t}</District>)}

      <path id="a7-line" d="M1845 431 C1857 488 1879 540 1906 608" />
      <path id="camaret-line" d="M2803 512 C2870 504 2905 492 2972 470" />
      <path id="caderousse-line" d="M1952 1108 Q1958 1040 1971 918" />
      <Place $color="#2b2b2b"><textPath href="#a7-line">Autoroute du Soleil</textPath></Place>
      <Place $color="#2b2b2b"><textPath href="#camaret-line">Route de Camaret</textPath></Place>
      <Place $color="#2b2b2b" textAnchor="end"><textPath href="#caderousse-line" startOffset="98%">Voie de Caderousse</textPath></Place>

      <Place $color="#24700f" x="2224" y="483" textAnchor="middle">Camping Manon</Place>
      <Place $color="#a53b68" x="2775" y="449" textAnchor="middle">Centre hospitalier</Place>
      <Place $color="#a53b68" x="2775" y="473" textAnchor="middle">d'Orange</Place>
      <Place $color="#c4511c" x="3115" y="442" textAnchor="middle">La terrasse du Golf</Place>
      <Place $color="#c4511c" x="3144" y="567">Brasserie la</Place>
      <Place $color="#c4511c" x="2258" y="1035" textAnchor="middle">Bar du marché</Place>
      <Place $color="#754a33" x="2668" y="807" textAnchor="middle">Casino</Place>
      <Place $color="#754a33" x="3134" y="1073" textAnchor="middle">Musée aéronautique</Place>
      <Place $color="#4a5bb0" x="3175" y="1006" fontStyle="italic">Meyne Claire</Place>

      <path d="M2224 444l7 11h-14z" stroke="#24700f" strokeWidth="2" fill="#d9f0cc" />
      <path d="M2216 455h16" stroke="#24700f" strokeWidth="3" />
      <path d="M2774 405v18M2765 414h18" stroke="#f4e6ec" strokeWidth="8" strokeLinecap="butt" />
      <path d="M2774 405v18M2765 414h18" stroke="#b23a67" strokeWidth="5" strokeLinecap="butt" />
      <Fork x={3115} y={407} />
      <Fork x={3233} y={531} />
      <Fork x={2258} y={999} />
      <path d="M2660 767h13l2-2M2660 767l2 7h12v-9M2663 778h1M2671 778h1" stroke="#754a33" strokeWidth="2" fill="#754a33" />
      <path d="M3125 1034l8-5 8 5zM3127 1037v7M3133 1037v7M3139 1037v7M3125 1044h16" stroke="#754a33" strokeWidth="2" fill="#754a33" />

      <Shield x={1845} y={402} label="A 7" />
      <Shield x={1947} y={674} label="A 7" />
      <Shield x={2080} y={855} label="A 9" />
      <Shield x={2150} y={1018} label="A 9" />
      <rect x="2706" y="529" width="65" height="23" rx="5" fill="#fff" stroke="#222" strokeWidth="2" />
      <ShieldText x="2738" y="547" fill="#222">D 975</ShieldText>

      <City $color="#0c0c0c" x="2486" y="703" textAnchor="middle">Orange</City>

      <path d="M2496 705C2480 708 2485 717 2504 717S2529 708 2513 705" stroke="#9c1fb0" strokeWidth="4" />
      <path
        fillRule="evenodd"
        fill="#9c1fb0"
        d="M2505 655a16 16 0 0 1 16 16c0 10-10 20-14 38h-4c-4-18-14-28-14-38a16 16 0 0 1 16-16zm0 8a8 8 0 1 0 0 16a8 8 0 0 0 0-16z"
      />

      <circle cx="1771" cy="1048" r="16" fill="#fff" stroke="#8f8f8f" strokeWidth="3" />
      <path d="M1763 1055c-1-10 2-16 9-16a8 8 0 0 1 1 16c-3 1-7 1-10 0z" fill="#8f8f8f" />
      <path d="M1773 1042l2 4 4 2-4 2-2 4-2-4-4-2 4-2z" fill="#fff" />
      <Wordmark x="1793" y="1057">mapbox</Wordmark>
    </MapSvg>
  );
}

/* ---------- icons ---------- */

const BellIcon = () => (
  <svg viewBox="0 0 24 24" fill="#ff9800" role="img" aria-label="Reminder">
    <path d="M21,19V20H3V19L5,17V11C5,7.900 7.030,5.170 10,4.290C10,4.190 10,4.100 10,4A2,2 0 0,1 12,2A2,2 0 0,1 14,4C14,4.100 14,4.190 14,4.290C16.970,5.170 19,7.900 19,11V17L21,19M14,21A2,2 0 0,1 12,23A2,2 0 0,1 10,21" />
  </svg>
);

const CalendarIcon = () => (
  <svg viewBox="0 0 24 24" fill="#43ab48" role="img" aria-label="Appointment">
    <path d="M19,19H5V8H19M16,1V3H8V1H6V3H5C3.890,3 3,3.890 3,5V19A2,2 0 0,0 5,21H19A2,2 0 0,0 21,19V5C21,3.890 20.100,3 19,3H18V1M17,12H12V17H17V12Z" />
  </svg>
);

const TABS = ["Details", "Interventions", "Reminders", "Calendar"];

export default function App() {
  const [tab, setTab] = useState("Details");
  return (
    <Page>
      <GlobalStyle />
      <TabBar role="tablist">
        {TABS.map((name) => (
          <Tab key={name} role="tab" aria-selected={tab === name} $active={tab === name} onClick={() => setTab(name)}>
            {name}
          </Tab>
        ))}
      </TabBar>
      <Columns>
        <ClientColumn>
          <Heading>
            <Title>Mr Beauchemin Thibaut</Title>
            <ClientKind>Private individual</ClientKind>
          </Heading>
          <Details>
            <Group>
              <Row>
                <Term>Last intervention :</Term>
                <Value><Badge>1/6/2021</Badge></Value>
              </Row>
            </Group>
            <Group>
              <Row $tall>
                <Term>Marking(s) :</Term>
                <Markings><BellIcon /><CalendarIcon /><GiCampfire color="#d90000" viewBox="-36 -56 584 584" /></Markings>
              </Row>
              <Row>
                <Term>Next appointment :</Term>
                <Value><Link href="#appointment">Monday, May 3, 2021, 10:00 AM</Link></Value>
              </Row>
              <Row>
                <Term>Recurrence of interventions :</Term>
                <Value>12 months</Value>
              </Row>
            </Group>
            <Group>
              <Row>
                <Term>ID :</Term>
                <Value>6759</Value>
              </Row>
              <Row>
                <Term>Main phone :</Term>
                <Value><Link href="tel:0616044219">0616044219</Link></Value>
              </Row>
              <Row>
                <Term>E-mail :</Term>
                <Value><Link href="mailto:t.beauchemin@hotmail.fr">t.beauchemin@hotmail.fr</Link></Value>
              </Row>
            </Group>
            <Group>
              <Row>
                <Term>Address :</Term>
                <Value>
                  <Address>
                    <Link href="#map">12 rue Grande Fusterie</Link>
                    <Link href="#map">84100 ORANGE</Link>
                    <Link href="#map">France</Link>
                  </Address>
                </Value>
              </Row>
            </Group>
          </Details>
        </ClientColumn>
        <MapColumn>
          <Heading $inset={107}>
            <LocationTitle>Location</LocationTitle>
          </Heading>
          <MapFrame id="map">
            <MapDrawing />
            <ControlGroup $side="left">
              <ControlButton aria-label="Zoom in">
                <svg width="22" height="22" stroke="#333" strokeWidth="5" strokeLinecap="round"><path d="M11 3v16M3 11h16" /></svg>
              </ControlButton>
              <ControlButton aria-label="Zoom out">
                <svg width="22" height="22" stroke="#333" strokeWidth="5" strokeLinecap="round"><path d="M3 11h16" /></svg>
              </ControlButton>
              <ControlButton aria-label="Reset bearing to north">
                <svg width="14" height="30"><path d="M7 0l7 13H0z" fill="#333" /><path d="M7 30l7-13H0z" fill="#ccc" /></svg>
              </ControlButton>
            </ControlGroup>
            <ControlGroup $side="right">
              <ControlButton aria-label="Enter fullscreen">
                <svg width="34" height="34" viewBox="-17 -17 34 34" fill="#333">
                  {[0, 90, 180, 270].map((a) => (
                    <path key={a} transform={`rotate(${a})`} d="M-17 -14a2.500 2.500 0 0 1 3 -3h11l-4 4 6 9a1.500 1.500 0 0 1-3 3l-9-6-4 4z" />
                  ))}
                </svg>
              </ControlButton>
            </ControlGroup>
            <Attribution>
              <Link href="#mapbox">© Mapbox</Link>
              <Link href="#osm">© OpenStreetMap</Link>
              <StrongLink href="#improve">Improve this map</StrongLink>
            </Attribution>
          </MapFrame>
          <Perimeter>Display other clients within the same perimeter :</Perimeter>
        </MapColumn>
      </Columns>
      <ScrollThumb />
    </Page>
  );
}
